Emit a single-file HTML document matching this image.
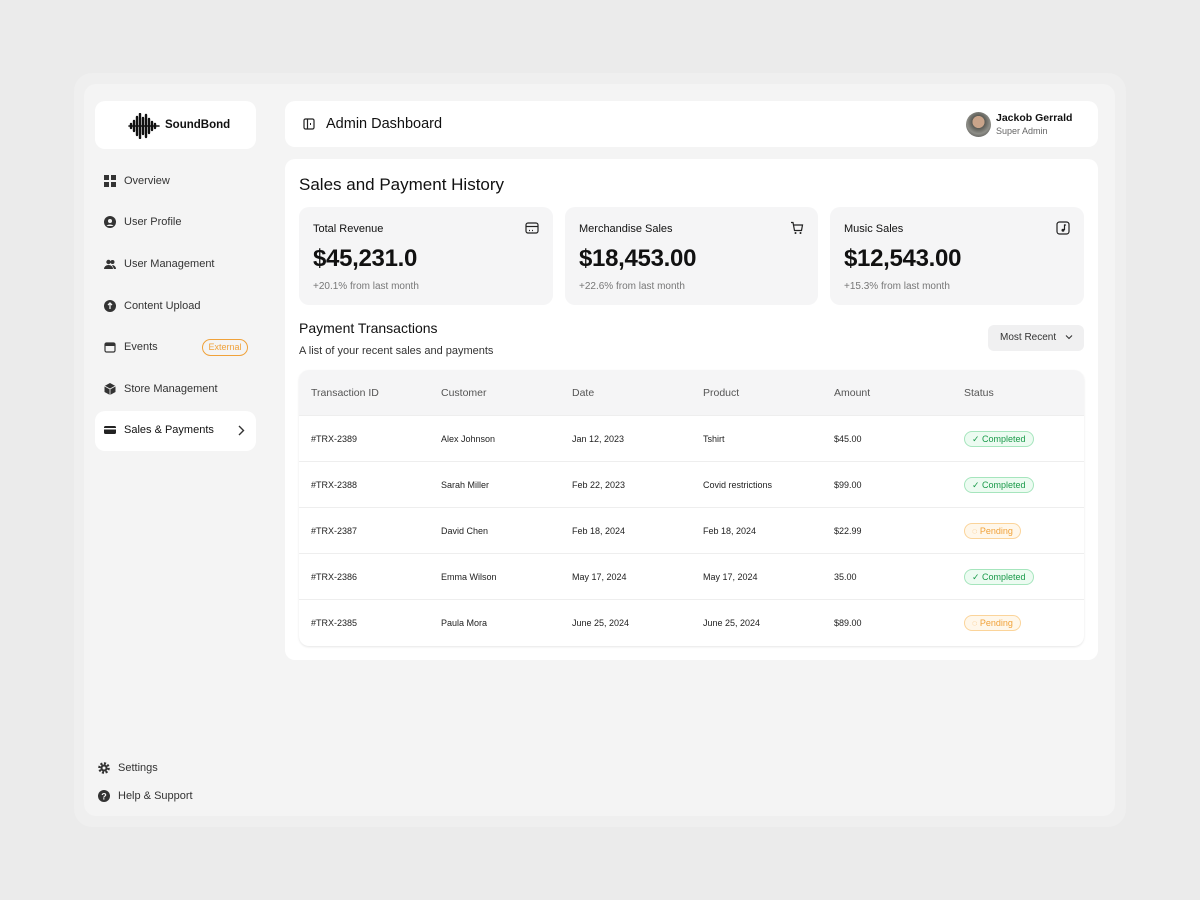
<!DOCTYPE html>
<html><head><meta charset="utf-8"><style>
*{box-sizing:border-box;margin:0;padding:0}
body{width:1200px;height:900px;background:#ebebeb;font-family:"Liberation Sans",sans-serif;color:#111;position:relative;overflow:hidden}
.outer{position:absolute;left:74px;top:73px;width:1052px;height:754px;background:#efefef;border-radius:18px}
.inner{position:absolute;left:84px;top:84px;width:1031px;height:732px;background:#f4f4f4;border-radius:12px}
.card{position:absolute;background:#fff;border-radius:10px}
.nav{position:absolute;left:104px;font-size:11px;color:#333;display:flex;align-items:center;gap:8px}
.nav svg{width:12px;height:12px}
.stat{position:absolute;top:207px;width:254px;height:98px;background:#f5f5f6;border-radius:10px}
.stat .t{position:absolute;left:14px;top:16px;font-size:11px;color:#111}
.stat .v{position:absolute;left:14px;top:38px;font-size:24px;font-weight:bold;letter-spacing:-0.3px}
.stat .s{position:absolute;left:14px;top:74px;font-size:10px;color:#777}
.stat svg{position:absolute;right:14px;top:14px;width:14px;height:14px}
.tbl{position:absolute;left:299px;top:370px;width:785px;height:276px;border-radius:10px;background:#fff;box-shadow:0 1px 2px rgba(0,0,0,.1);overflow:hidden}
.row{position:absolute;left:0;width:785px;height:46px;font-size:9px;color:#222;border-bottom:1px solid #eee}
.row span{position:absolute;top:18px}
.hd{background:#f5f5f6;font-size:10.5px;color:#555}
.hd span{top:17px}
.badge{position:absolute;left:665px;top:15px;height:16px;border-radius:8px;font-size:9px;padding:0 7px;line-height:14px}
.c{border:1px solid #a6e5bd;background:#ecfbf1;color:#1a9a4a}
.p{border:1px solid #fbd49a;background:#fff7ea;color:#f0a23a}
</style></head><body>
<div class="outer"></div><div class="inner"></div>
<div class="card" style="left:95px;top:101px;width:161px;height:48px">
<svg style="position:absolute;left:33px;top:12px" width="32" height="26" viewBox="0 0 32 26"><g stroke="#111" stroke-width="2.4" stroke-linecap="round"><line x1="1" y1="13" x2="31" y2="13" stroke-width="1.6"/><line x1="3" y1="11" x2="3" y2="15"/><line x1="6" y1="8" x2="6" y2="18"/><line x1="9" y1="4" x2="9" y2="22"/><line x1="12" y1="1" x2="12" y2="25"/><line x1="15" y1="5" x2="15" y2="21"/><line x1="18" y1="2" x2="18" y2="24"/><line x1="21" y1="6" x2="21" y2="20"/><line x1="24" y1="9" x2="24" y2="17"/><line x1="27" y1="11" x2="27" y2="15"/></g></svg>
<div style="position:absolute;left:70px;top:18px;font-size:11.5px;font-weight:bold">SoundBond</div></div>
<div class="nav" style="top:175px"><svg viewBox="0 0 12 12"><rect x="0" y="0" width="5" height="5" fill="#333"/><rect x="7" y="0" width="5" height="5" fill="#333"/><rect x="0" y="7" width="5" height="5" fill="#333"/><rect x="7" y="7" width="5" height="5" fill="#333"/></svg>Overview</div>
<div class="nav" style="top:216px"><svg viewBox="0 0 12 12"><circle cx="6" cy="6" r="6" fill="#333"/><circle cx="6" cy="5" r="2" fill="#f4f4f4"/><path d="M2.5 10a4 3 0 0 1 7 0" fill="#f4f4f4"/></svg>User Profile</div>
<div class="nav" style="top:258px"><svg viewBox="0 0 12 12"><circle cx="4.5" cy="4" r="2.2" fill="#333"/><circle cx="8.5" cy="4" r="2" fill="#333"/><path d="M0 11a4.5 4 0 0 1 9 0zM8 7a4 4 0 0 1 4 4h-2z" fill="#333"/></svg>User Management</div>
<div class="nav" style="top:300px"><svg viewBox="0 0 12 12"><circle cx="6" cy="6" r="6" fill="#333"/><path d="M6 3v6M4 5l2-2 2 2" stroke="#f4f4f4" stroke-width="1.3" fill="none"/></svg>Content Upload</div>
<div class="nav" style="top:341px"><svg viewBox="0 0 12 12"><rect x="1" y="2" width="10" height="9" rx="1.5" fill="none" stroke="#333" stroke-width="1.2"/><rect x="1" y="2" width="10" height="3" fill="#333"/></svg>Events</div>
<div style="position:absolute;left:202px;top:339px;width:46px;height:17px;border:1px solid #f0a23a;border-radius:9px;font-size:9px;color:#f0a23a;text-align:center;line-height:15px">External</div>
<div class="nav" style="top:383px"><svg viewBox="0 0 12 12"><path d="M6 0l5.5 3v6L6 12 .5 9V3z" fill="#333"/><path d="M.5 3L6 6l5.5-3M6 6v6" stroke="#f4f4f4" stroke-width=".8" fill="none"/></svg>Store Management</div>
<div class="card" style="left:95px;top:411px;width:161px;height:40px"></div>
<div class="nav" style="top:424px;color:#111"><svg viewBox="0 0 12 12"><rect x="0" y="2" width="12" height="8" rx="1.5" fill="#222"/><rect x="0" y="4" width="12" height="1.5" fill="#fff"/></svg>Sales &amp; Payments</div>
<svg style="position:absolute;left:237px;top:425px" width="8" height="11" viewBox="0 0 8 11"><path d="M2 1l4.5 4.5L2 10" stroke="#333" stroke-width="1.4" fill="none"/></svg>
<div class="nav" style="top:762px;left:98px"><svg viewBox="0 0 12 12"><circle cx="6" cy="6" r="4.5" fill="none" stroke="#333" stroke-width="2.6" stroke-dasharray="2 1.5"/><circle cx="6" cy="6" r="3.5" fill="#333"/><circle cx="6" cy="6" r="1.5" fill="#f4f4f4"/></svg>Settings</div>
<div class="nav" style="top:790px;left:98px"><svg viewBox="0 0 12 12"><circle cx="6" cy="6" r="6" fill="#333"/><text x="6" y="9.5" font-size="9" font-weight="bold" fill="#f4f4f4" text-anchor="middle" font-family="Liberation Sans">?</text></svg>Help &amp; Support</div>

<div class="card" style="left:285px;top:101px;width:813px;height:46px">
<svg style="position:absolute;left:18px;top:17px" width="12" height="12" viewBox="0 0 12 12"><rect x="1" y="1" width="10" height="10" rx="1.5" fill="none" stroke="#222" stroke-width="1.2"/><line x1="4.5" y1="1" x2="4.5" y2="11" stroke="#222" stroke-width="1.2"/><line x1="7.5" y1="5" x2="7.5" y2="7" stroke="#222"/></svg>
<div style="position:absolute;left:41px;top:15px;font-size:14.5px">Admin Dashboard</div>
<div style="position:absolute;left:681px;top:11px;width:25px;height:25px;border-radius:50%;background:radial-gradient(circle at 50% 40%,#c9a48a 0 30%,#5b5b55 32%,#8e8e88 60%,#3a3a3a 100%)"></div>
<div style="position:absolute;left:711px;top:11px;font-size:10.5px;font-weight:bold">Jackob Gerrald</div>
<div style="position:absolute;left:711px;top:25px;font-size:9px;color:#666">Super Admin</div></div>

<div class="card" style="left:285px;top:159px;width:813px;height:501px"></div>
<div style="position:absolute;left:299px;top:175px;font-size:17px">Sales and Payment History</div>
<div class="stat" style="left:299px"><div class="t">Total Revenue</div><div class="v">$45,231.0</div><div class="s">+20.1% from last month</div><svg viewBox="0 0 14 14"><rect x="1" y="2" width="12" height="10" rx="2" fill="none" stroke="#222" stroke-width="1.2"/><line x1="1" y1="5.5" x2="13" y2="5.5" stroke="#222" stroke-width="1.2"/><path d="M4 9.5h1M7 9.5h1" stroke="#222" stroke-width="1.2"/></svg></div>
<div class="stat" style="left:565px;width:253px"><div class="t">Merchandise Sales</div><div class="v">$18,453.00</div><div class="s">+22.6% from last month</div><svg viewBox="0 0 14 14"><path d="M1 1.5h2l1.5 8h7l1-5.5H4" fill="none" stroke="#222" stroke-width="1.2"/><circle cx="5.5" cy="12" r="1" fill="#222"/><circle cx="10.5" cy="12" r="1" fill="#222"/></svg></div>
<div class="stat" style="left:830px"><div class="t">Music Sales</div><div class="v">$12,543.00</div><div class="s">+15.3% from last month</div><svg viewBox="0 0 14 14"><rect x="1" y="1" width="12" height="12" rx="2.5" fill="none" stroke="#222" stroke-width="1.2"/><path d="M8.5 3.5v5.5" stroke="#222" stroke-width="1.2"/><circle cx="7" cy="9.2" r="1.5" fill="#222"/><path d="M8.5 3.5l1.5.8" stroke="#222"/></svg></div>

<div style="position:absolute;left:299px;top:320px;font-size:14px">Payment Transactions</div>
<div style="position:absolute;left:299px;top:345px;font-size:11px;color:#333">A list of your recent sales and payments</div>
<div style="position:absolute;left:988px;top:325px;width:96px;height:26px;background:#f0f0f1;border-radius:6px;font-size:10px;color:#333;padding:7px 0 0 12px">Most Recent <svg style="margin-left:6px" width="8" height="6" viewBox="0 0 8 6"><path d="M1 1.5l3 3 3-3" stroke="#333" stroke-width="1.1" fill="none"/></svg></div>

<div class="tbl">
<div class="row hd" style="top:0"><span style="left:12px">Transaction ID</span><span style="left:142px">Customer</span><span style="left:273px">Date</span><span style="left:404px">Product</span><span style="left:535px">Amount</span><span style="left:665px">Status</span></div>
<div class="row" style="top:46px"><span style="left:12px">#TRX-2389</span><span style="left:142px">Alex Johnson</span><span style="left:273px">Jan 12, 2023</span><span style="left:404px">Tshirt</span><span style="left:535px">$45.00</span><div class="badge c">✓ Completed</div></div>
<div class="row" style="top:92px"><span style="left:12px">#TRX-2388</span><span style="left:142px">Sarah Miller</span><span style="left:273px">Feb 22, 2023</span><span style="left:404px">Covid restrictions</span><span style="left:535px">$99.00</span><div class="badge c">✓ Completed</div></div>
<div class="row" style="top:138px"><span style="left:12px">#TRX-2387</span><span style="left:142px">David Chen</span><span style="left:273px">Feb 18, 2024</span><span style="left:404px">Feb 18, 2024</span><span style="left:535px">$22.99</span><div class="badge p">◌ Pending</div></div>
<div class="row" style="top:184px"><span style="left:12px">#TRX-2386</span><span style="left:142px">Emma Wilson</span><span style="left:273px">May 17, 2024</span><span style="left:404px">May 17, 2024</span><span style="left:535px">35.00</span><div class="badge c">✓ Completed</div></div>
<div class="row" style="top:230px;border-bottom:none"><span style="left:12px">#TRX-2385</span><span style="left:142px">Paula Mora</span><span style="left:273px">June 25, 2024</span><span style="left:404px">June 25, 2024</span><span style="left:535px">$89.00</span><div class="badge p">◌ Pending</div></div>
</div>
</body></html>
